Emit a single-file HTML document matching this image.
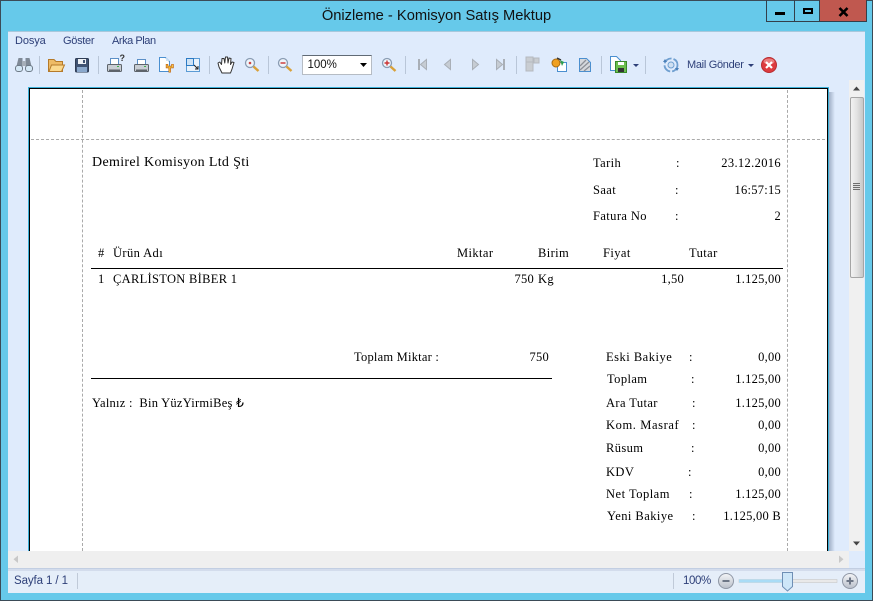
<!DOCTYPE html>
<html><head><meta charset="utf-8">
<style>
html,body{margin:0;padding:0}
body{width:873px;height:601px;position:relative;overflow:hidden;background:#66C9EA;font-family:"Liberation Sans",sans-serif}
div,span,svg{position:absolute}
.u{font-size:11px;color:#2d3f78;line-height:14px;white-space:nowrap}
.s{font-family:"Liberation Serif",serif;font-size:12.5px;color:#000;line-height:14px;white-space:nowrap;letter-spacing:.4px}
.r{text-align:right;letter-spacing:.25px}
.sep{width:1px;height:18px;top:56px;background:#b9c6d8}
</style></head><body>
<div style="left:0;top:0;width:871px;height:599px;border:1px solid #3b4b57"></div>
<div style="left:0;width:873px;text-align:center;top:7px;font-size:14.7px;line-height:18px;color:#111">Önizleme - Komisyon Satış Mektup</div>

<div style="left:766px;top:0;width:27px;height:21px;border:1px solid #333f4a;border-top:0"></div>
<div style="left:794px;top:0;width:25px;height:21px;border:1px solid #333f4a;border-top:0;border-left:0"></div>
<div style="left:820px;top:0;width:46px;height:21px;background:#C0584F;border:1px solid #333f4a;border-top:0;border-left:0"></div>
<div style="left:775px;top:12px;width:10px;height:3px;background:#000"></div>
<div style="left:803px;top:8px;width:6px;height:2px;border:2px solid #000;border-top-width:2px"></div>
<svg style="left:838px;top:7px" width="11" height="10"><path d="M1.500 1 L9.500 9 M9.500 1 L1.500 9" stroke="#000" stroke-width="2.600"/></svg>

<!-- client -->
<div style="left:8px;top:31px;width:857px;height:562px;background:#DFEBFC"></div>
<div style="left:8px;top:31px;width:857px;height:1px;background:#a8c8dc"></div>
<div class="u" style="left:15px;top:34px;letter-spacing:-.1px">Dosya</div>
<div class="u" style="left:63px;top:34px;letter-spacing:-.3px">Göster</div>
<div class="u" style="left:112px;top:34px;letter-spacing:-.45px">Arka Plan</div>

<!-- toolbar icons -->
<svg style="left:0;top:50px" width="873" height="30" viewBox="0 50 873 30">
<!-- binoculars -->
<path d="M17 64 L18.500 58 H22.500 V70 H16 Z M31 64 L29.500 58 H25.500 V70 H32Z" fill="#7f8a97"/>
<rect x="15.500" y="65.500" width="7" height="6" rx="2.500" fill="#d4e8f6" stroke="#6f7b88"/><rect x="25.500" y="65.500" width="7" height="6" rx="2.500" fill="#d4e8f6" stroke="#6f7b88"/>
<rect x="22" y="61" width="4" height="5" fill="#a5aeb8"/>
<!-- folder -->
<path d="M48.500 71.500 V59.500 H54 L56 61.500 H62.500 V71.500Z" fill="#eebb66" stroke="#b57a2a"/>
<path d="M49 71.500 L51.500 65 H64.500 L61.500 71.500Z" fill="#fbd98e" stroke="#b57a2a"/>
<!-- save -->
<rect x="75.500" y="58.500" width="13" height="13.500" rx="1" fill="#3f5272" stroke="#2f3d55"/>
<rect x="78" y="59" width="8" height="5" fill="#eef1f5"/><rect x="83" y="60" width="2" height="3" fill="#3f5272"/>
<rect x="77" y="67" width="10" height="5" fill="#8aa8cc"/>
<!-- printer ? -->
<rect x="110.500" y="58.500" width="8" height="7" fill="#fff" stroke="#5b8fc7"/><rect x="107.500" y="64.500" width="14" height="7" rx="1" fill="#c9ced4" stroke="#5e646b"/><rect x="109" y="69.500" width="11" height="1.500" fill="#5d636a"/><rect x="117" y="66" width="2" height="1" fill="#3fae49"/>
<text x="119.500" y="61" font-family="Liberation Sans" font-size="9" font-weight="bold" fill="#333">?</text>
<!-- printer -->
<rect x="137.500" y="59.500" width="8" height="6" fill="#fff" stroke="#5b8fc7"/><rect x="134.500" y="64.500" width="14" height="7" rx="1" fill="#c9ced4" stroke="#5e646b"/><rect x="136" y="69.500" width="11" height="1.500" fill="#5d636a"/><rect x="144" y="66" width="2" height="1" fill="#3fae49"/>
<!-- page setup -->
<path d="M159.500 57.500 H165.500 L169.500 61.500 V71.500 H159.500Z" fill="#fff" stroke="#4a8fd0"/>
<path d="M166 61 V57.500 L169.500 61Z" fill="#cfe3f5"/>
<path d="M167 64 V67 H172.500 V64 M169.700 67 V72.500" stroke="#c0620f" stroke-width="2.400" fill="none"/>
<path d="M167 64.500 V67 H172.500 V64.500 M169.700 67 V72" stroke="#f6c544" stroke-width="1" fill="none"/>
<!-- scale -->
<rect x="186.500" y="58.500" width="13" height="13" fill="#eaf3fb" stroke="#5b9bd5"/>
<rect x="186.500" y="58.500" width="7" height="7" fill="#cfe3f5" stroke="#2b7ac4"/>
<path d="M194 65 L198 69 M198 66 V69 H195" stroke="#222" fill="none"/>
<!-- hand -->
<path d="M222 73 L219 67 L218 63 L219.800 62 L221.500 64.500 L222 58.500 L224 58.500 L224.800 63 L225.500 57 L227.500 57 L228 63 L229 58 L231 58.500 L230.500 64.500 L232 62 L234 62.500 L232 69 L230.500 73Z" fill="#fff" stroke="#333" stroke-width="1" stroke-linejoin="round"/>
<!-- zoom -->
<circle cx="250" cy="63" r="4.500" fill="#eef5fb" stroke="#8a9cb3" stroke-width="1.300"/><circle cx="250" cy="63" r="1.300" fill="#c44"/>
<path d="M253.500 66.500 L258.500 71" stroke="#d9a13a" stroke-width="2.400"/>
<!-- zoom out -->
<circle cx="283" cy="63" r="4.500" fill="#eef5fb" stroke="#8a9cb3" stroke-width="1.300"/><path d="M280.500 63 H285.500" stroke="#c33" stroke-width="1.400"/>
<path d="M286.500 66.500 L291.500 71" stroke="#d9a13a" stroke-width="2.400"/>
<!-- zoom in -->
<circle cx="387" cy="63" r="4.500" fill="#eef5fb" stroke="#8a9cb3" stroke-width="1.300"/><path d="M384.500 63 H389.500 M387 60.500 V65.500" stroke="#c33" stroke-width="1.400"/>
<path d="M390.500 66.500 L395.500 71" stroke="#d9a13a" stroke-width="2.400"/>
<!-- nav -->
<g fill="#c6ccd3" stroke="#a9afb7"><rect x="418.500" y="59.500" width="1" height="10"/><path d="M426.500 59.500 V69.500 L420.500 64.500Z"/><path d="M450.500 59.500 V69.500 L444.500 64.500Z"/><path d="M472.500 59.500 V69.500 L478.500 64.500Z"/><path d="M496.500 59.500 V69.500 L502.500 64.500Z"/><rect x="503.500" y="59.500" width="1" height="10"/></g>
<!-- multipage disabled -->
<path d="M526 57 H533 V71 H526Z M534 58 H539 L539 63 H534Z" fill="#c9cdd2" stroke="#b5b9bf"/>
<path d="M526 62 H533" stroke="#b5b9bf"/>
<!-- color -->
<path d="M557.500 62.500 H566.500 V71.500 H557.500Z" fill="#fff" stroke="#4a8fd0"/>
<circle cx="556" cy="63" r="4" fill="#f0a020" stroke="#a86a10"/><path d="M557 58 L561 60" stroke="#333" stroke-width="1.300"/><path d="M560 60 L564 62 L562 66Z" fill="#2e9e4f"/>
<!-- watermark -->
<path d="M579.500 58.500 H586.500 L590.500 62.500 V71.500 H579.500Z" fill="#d5d8dc" stroke="#4a8fd0"/>
<path d="M580 66 L586 60 M580 70 L589 62 M584 71 L590 66" stroke="#8c9097" stroke-width="1.300"/>
<!-- export -->
<path d="M610.500 56.500 H616.500 L620.500 60.500 V70.500 H610.500Z" fill="#fff" stroke="#4a8fd0"/>
<rect x="615.500" y="61.500" width="11" height="11" fill="#6cbf4f" stroke="#3a8a2a"/><rect x="618" y="62" width="6" height="3" fill="#fff"/><rect x="618" y="68" width="6" height="4" fill="#333"/>
<path d="M633 64 H639 L636 67Z" fill="#2d3f78"/>
<!-- mail refresh -->
<circle cx="671" cy="65" r="6.500" fill="none" stroke="#6f9fd0" stroke-width="1.800" stroke-dasharray="9 2"/>
<circle cx="671" cy="65" r="3" fill="#cfe0f2" stroke="#6f9fd0"/>
<path d="M663 62 L667 62 L665 59Z M679 68 L675 68 L677 71Z" fill="#4a7fb8"/>
<path d="M748 64 H754 L751 67Z" fill="#2d3f78"/>
<!-- close red -->
<circle cx="769" cy="65" r="7.500" fill="#dd3b3f" stroke="#b82c30"/><ellipse cx="769" cy="61.500" rx="5.500" ry="3" fill="#f09a9a" opacity=".7"/>
<path d="M766 62 L772 68 M772 62 L766 68" stroke="#fff" stroke-width="2.200"/>
</svg>
<div class="sep" style="left:39px"></div>
<div class="sep" style="left:98px"></div>
<div class="sep" style="left:209px"></div>
<div class="sep" style="left:268px"></div>
<div class="sep" style="left:405px"></div>
<div class="sep" style="left:516px"></div>
<div class="sep" style="left:601px"></div>
<div class="sep" style="left:645px"></div>
<div style="left:302px;top:55px;width:68px;height:18px;background:#fff;border:1px solid #b6bcc4;border-top-color:#606a75"></div>
<div style="left:307.500px;top:58px;font-size:11.500px;line-height:14px;color:#111">100%</div>
<svg style="left:360px;top:63px" width="8" height="4"><path d="M0 0H7L3.500 4Z" fill="#000"/></svg>
<div class="u" style="left:687px;top:58px;font-size:11px;letter-spacing:-.3px">Mail Gönder</div>

<!-- page -->
<div style="left:28px;top:87px;width:801px;height:1px;background:#3bb0d8"></div>
<div style="left:28px;top:87px;width:1px;height:464px;background:#3bb0d8"></div>
<div style="left:828px;top:87px;width:1px;height:464px;background:#3bb0d8"></div>
<div style="left:829px;top:92px;width:6px;height:459px;background:linear-gradient(90deg,#a0afc6,#dfebfc)"></div>
<div style="left:29px;top:88px;width:799px;height:463px;background:#fff;border-top:1px solid #000;border-left:1px solid #000;border-right:1px solid #000;box-sizing:border-box"></div>
<div style="left:82px;top:90px;height:461px;border-left:1px dashed #aaa"></div>
<div style="left:787px;top:90px;height:461px;border-left:1px dashed #aaa"></div>
<div style="left:31px;top:139px;width:794px;border-top:1px dashed #aaa"></div>

<div class="s" style="left:92px;top:156px;font-size:14px;letter-spacing:.33px">Demirel Komisyon Ltd Şti</div>
<div class="s" style="left:593px;top:156px">Tarih</div><div class="s" style="left:676px;top:156px">:</div><div class="s r" style="right:92px;top:156px;letter-spacing:.35px">23.12.2016</div>
<div class="s" style="left:593px;top:183px">Saat</div><div class="s" style="left:675px;top:183px">:</div><div class="s r" style="right:92px;top:183px">16:57:15</div>
<div class="s" style="left:593px;top:209px">Fatura No</div><div class="s" style="left:675px;top:209px">:</div><div class="s r" style="right:92px;top:209px">2</div>

<div class="s" style="left:98px;top:246px">#</div>
<div class="s" style="left:113px;top:246px">Ürün Adı</div>
<div class="s" style="left:457px;top:246px">Miktar</div>
<div class="s" style="left:538px;top:246px">Birim</div>
<div class="s" style="left:603px;top:246px">Fiyat</div>
<div class="s" style="left:689px;top:246px">Tutar</div>
<div style="left:91px;top:268px;width:692px;height:1px;background:#000"></div>
<div class="s" style="left:98px;top:272px">1</div>
<div class="s" style="left:113px;top:272px;letter-spacing:.3px">ÇARLİSTON BİBER 1</div>
<div class="s r" style="right:339px;top:272px">750</div>
<div class="s" style="left:538px;top:272px">Kg</div>
<div class="s r" style="right:189px;top:272px">1,50</div>
<div class="s r" style="right:92px;top:272px">1.125,00</div>

<div class="s" style="left:354px;top:350px;letter-spacing:.22px">Toplam Miktar :</div>
<div class="s r" style="right:324px;top:350px">750</div>
<div style="left:91px;top:378px;width:461px;height:1px;background:#000"></div>
<div class="s" style="left:92px;top:396px;letter-spacing:.25px">Yalnız :&nbsp; Bin YüzYirmiBeş ₺</div>

<div class="s" style="left:606px;top:350px;letter-spacing:.5px">Eski Bakiye</div><div class="s" style="left:689px;top:350px">:</div><div class="s r" style="right:92px;top:350px">0,00</div>
<div class="s" style="left:607px;top:372px">Toplam</div><div class="s" style="left:691px;top:372px">:</div><div class="s r" style="right:92px;top:372px">1.125,00</div>
<div class="s" style="left:606px;top:396px">Ara Tutar</div><div class="s" style="left:692px;top:396px">:</div><div class="s r" style="right:92px;top:396px">1.125,00</div>
<div class="s" style="left:606px;top:418px;letter-spacing:.6px">Kom. Masraf</div><div class="s" style="left:692px;top:418px">:</div><div class="s r" style="right:92px;top:418px">0,00</div>
<div class="s" style="left:606px;top:441px">Rüsum</div><div class="s" style="left:691px;top:441px">:</div><div class="s r" style="right:92px;top:441px">0,00</div>
<div class="s" style="left:606px;top:465px">KDV</div><div class="s" style="left:688px;top:465px">:</div><div class="s r" style="right:92px;top:465px">0,00</div>
<div class="s" style="left:606px;top:487px;letter-spacing:.5px">Net Toplam</div><div class="s" style="left:689px;top:487px">:</div><div class="s r" style="right:92px;top:487px">1.125,00</div>
<div class="s" style="left:607px;top:509px;letter-spacing:.45px">Yeni Bakiye</div><div class="s" style="left:692px;top:509px">:</div><div class="s r" style="right:92px;top:509px">1.125,00 B</div>

<!-- v scrollbar -->
<div style="left:849px;top:80px;width:15px;height:471px;background:#f0f0f0"></div>
<svg style="left:853px;top:86px" width="8" height="5"><path d="M0 4.500H7L3.500 0.500Z" fill="#444"/></svg>
<svg style="left:853px;top:541px" width="8" height="5"><path d="M0 0.500H7L3.500 4.500Z" fill="#444"/></svg>
<div style="left:850px;top:97px;width:12px;height:179px;border:1px solid #a5a5a5;border-radius:2px;background:linear-gradient(90deg,#f2f2f2,#e4e4e4 45%,#c8c8c8)"></div>
<div style="left:853px;top:183px;width:7px;height:7px;background:repeating-linear-gradient(180deg,#6f6f6f 0 1px,#e0e0e0 1px 2px)"></div>
<!-- h scrollbar -->
<div style="left:8px;top:551px;width:841px;height:17px;background:#efefef"></div>
<svg style="left:13px;top:555px" width="6" height="9"><path d="M5 0.500V8L0.500 4.300Z" fill="#c8c8c8"/></svg>
<svg style="left:838px;top:555px" width="6" height="9"><path d="M1 0.500V8L5.500 4.300Z" fill="#c8c8c8"/></svg>
<!-- status -->
<div style="left:8px;top:568px;width:857px;height:25px;background:#E5EEF9;border-top:1px solid #c2cee2;box-sizing:border-box"></div>
<div style="left:8px;top:569px;width:857px;height:2px;background:#d3dcec"></div>
<div class="u" style="left:14px;top:574px;font-size:11.500px;letter-spacing:-.1px">Sayfa 1 / 1</div>
<div style="left:77px;top:573px;width:1px;height:16px;background:#c0cad8"></div>
<div style="left:673px;top:573px;width:1px;height:16px;background:#c0cad8"></div>
<div class="u" style="left:683px;top:574px;font-size:11.500px;letter-spacing:-.4px">100%</div>
<svg style="left:715px;top:570px" width="150" height="24">
<defs><linearGradient id="g" x1="0" y1="0" x2="0" y2="1"><stop offset="0" stop-color="#f4f5f7"/><stop offset="1" stop-color="#b9bfca"/></linearGradient></defs>
<circle cx="11" cy="11" r="7.500" fill="url(#g)" stroke="#8f97a5"/><path d="M7.500 11H14.500" stroke="#6d7686" stroke-width="2"/>
<circle cx="135" cy="11" r="7.500" fill="url(#g)" stroke="#8f97a5"/><path d="M131.500 11H138.500M135 7.500V14.500" stroke="#6d7686" stroke-width="2"/>
<rect x="24" y="9.500" width="98" height="3" fill="#e9e9e9" stroke="#c8c8c8" stroke-width=".6"/>
<rect x="24" y="9.500" width="45" height="3" fill="#a9dcf6"/>
<path d="M67.500 2.500 H77.500 V16.500 L72.500 21 L67.500 16.500Z" fill="#cde6f8" stroke="#6f8fb5"/>
</svg>
</body></html>
